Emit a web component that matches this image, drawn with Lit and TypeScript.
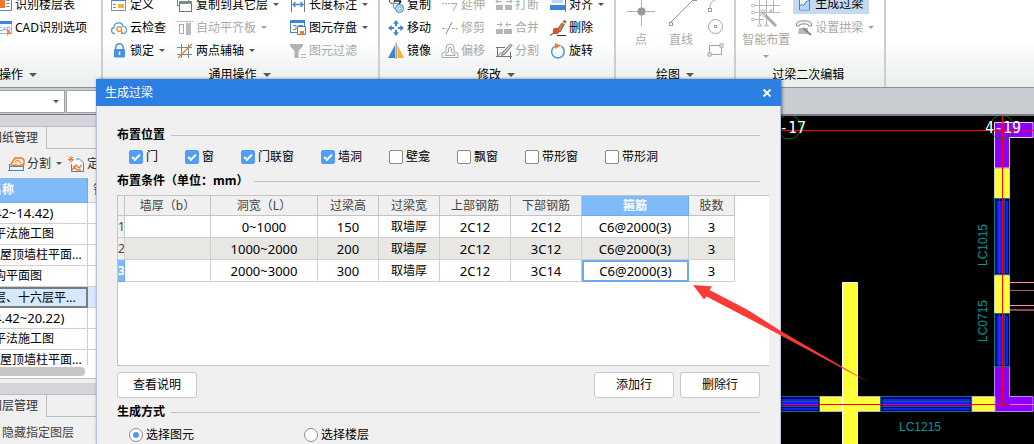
import { LitElement, html, css, svg, nothing } from "lit";
import { customElement, state } from "lit/decorators.js";
import { classMap } from "lit/directives/class-map.js";

const G = "#a9a9a9";

const icons: Record<string, unknown> = {
  floorTable: svg`<path d="M.5 0v13.500h15V0" fill="#fff" stroke="#4a86c8"/><rect x="4" y="2" width="5" height="9" fill="#f07a28"/><path d="M10.500 3.500h3M10.500 6.500h3M10.500 9.500h3" stroke="#777"/>`,
  cad: svg`<rect x=".5" y="1.500" width="15" height="12" fill="#fff" stroke="#9db8d8"/><rect y="1" width="16" height="3" fill="#3f86d2"/><text x="2" y="11" font-size="6" font-family="Liberation Sans" fill="#3f86d2">CAD</text><path d="M11 8v8l2-2h3z" fill="#f4844a"/>`,
  define: svg`<rect x=".5" y="1.500" width="14" height="12" fill="#fff" stroke="#8b9296"/><path d="M0 2.500h15" stroke="#3f86d2" stroke-width="3"/><rect x="7" y="7" width="6" height="4" fill="#f9b233"/><path d="M2 7.500h3M2 10.500h3" stroke="#888"/>`,
  cloud: svg`<path d="M4 13.500C-.5 13.500-.3 8 3 7.700 3 2 11 1 12 6.500c4.500 0 4.500 7 .5 7h-2.500" fill="none" stroke="#4b93dd" stroke-width="1.200"/><circle cx="8.200" cy="9" r="2.400" fill="none" stroke="#ef8636" stroke-width="1.300"/><path d="M10 11l2 2.500" stroke="#ef8636" stroke-width="1.300"/>`,
  lock: svg`<path d="M4.700 7V4.500a3.700 3.700 0 0 1 7.400 0V7" fill="none" stroke="#4a90e0" stroke-width="1.500"/><rect x="3" y="6" width="11" height="8.500" rx="1" fill="#4a90e0"/><path d="M8.500 8.500v3.500" stroke="#fff" stroke-width="1.500"/>`,
  copyFloor: svg`<rect x=".5" y="-1.500" width="11" height="10" fill="#fff" stroke="#4a90d8"/><rect x="2.500" y="4.500" width="12" height="10" fill="#fff" stroke="#6d777b"/><path d="M2 5.500h13" stroke="#7d898d" stroke-width="3"/>`,
  alignSlab: svg`<path d="M0 1.500h16" stroke="${G}" stroke-dasharray="2 1"/><rect x="2.500" y="4.500" width="4" height="9" fill="none" stroke="${G}"/><rect x="9" y="3" width="5" height="12" fill="#b9b9b9"/>`,
  axis: svg`<path d="M4.500 1v14M11.500 1v14M0 4.500h15M0 11.500h15" stroke="#7f8a8e"/><path d="M1 15L15 1" stroke="#e5813d" stroke-width="1.300"/>`,
  dim: svg`<path d="M1.500 0v15M14.500 0v15" stroke="#777"/><path d="M3 7.500h10M5.500 5L3 7.500 5.500 10M10.500 5L13 7.500 10.500 10" stroke="#3f86d2" fill="none" stroke-width="1.300"/>`,
  save: svg`<rect x=".5" y=".5" width="14" height="12" fill="#fff" stroke="#4a86c0"/><path d="M0 1.500h15" stroke="#3f86d2" stroke-width="3"/><path d="M3 5.500h3v4H3M8 5.500h5" stroke="#7c8a90" fill="none"/><path d="M7.500 6.500h8v8h-8z" fill="#fff" stroke="#3f86d2"/><rect x="10" y="11" width="4" height="4" fill="#f07a28"/>`,
  filter: svg`<path d="M0 1h13v2L8.500 8v7h-4V8L0 3z" fill="#b2b2b2"/><path d="M11 11.500h5M11 14.500h5" stroke="#b2b2b2"/>`,
  copy: svg`<circle cx="4" cy="4" r="2.500" fill="none" stroke="#555"/><path d="M6 4h7M13 4l-2 3" stroke="#222" stroke-width="1.500"/><circle cx="8" cy="9" r="2.800" fill="#fff" stroke="#4a90c8"/><circle cx="11.500" cy="11.500" r="4" fill="#cfe6f4" stroke="#2f7fb8"/><circle cx="11.500" cy="11.500" r="1.600" fill="#fff" stroke="#2f7fb8" stroke-width=".7"/>`,
  move: svg`<path d="M8 0l3 3.700H9v2.500H7V3.700H5zM8 16l3-3.700H9V9.800H7v2.500H5zM0 8l3.700-3v2h2.500v2H3.700v2zM16 8l-3.700-3v2H9.800v2h2.500v2z" fill="#3f86d2"/>`,
  mirror: svg`<path d="M7 2v13H0z" fill="#3f86d2"/><path d="M9.500 2v13H16z" fill="#fbb034"/><path d="M8.200 0v16" stroke="#777"/>`,
  extend: svg`<path d="M0 6.500h9" stroke="${G}" stroke-dasharray="2 1"/><path d="M9 6.500h6L11 14" stroke="${G}" fill="none"/>`,
  trim: svg`<path d="M0 8.500h5M10 8.500h6" stroke="${G}" stroke-dasharray="3 1"/><path d="M4 14L10 2" stroke="#888"/>`,
  offset: svg`<path d="M0 14.500v-4l4-2V5a4 4 0 0 1 8 0v3.500l4 2v4z" fill="none" stroke="${G}"/><path d="M3.500 12.500v-2l3-1.500V5a2 2 0 0 1 3 0v4l3.500 2v1.500z" fill="none" stroke="${G}"/>`,
  brk: svg`<rect y="8" width="7" height="5" fill="#b5b5b5"/><rect x="9" y="8" width="7" height="5" fill="#b5b5b5"/><path d="M0 4.500h6M10 4.500h6M2 2L0 4.500l2 2M14 2l2 2.500-2 2" stroke="${G}" fill="none"/>`,
  merge: svg`<rect y="9" width="7" height="5" fill="#b5b5b5"/><rect x="8" y="9" width="8" height="5" fill="#b5b5b5"/><path d="M1 4.500h5M10 4.500h5M4 2l2 2.500L4 7M12 2l-2 2.500L12 7" stroke="${G}" fill="none"/>`,
  split: svg`<path d="M0 4.500h9M1.500 4v9M0 13.500h16M14.500 9v7M1.500 13l4-4" stroke="#777" fill="none"/><path d="M14.500 1L7 9l-1.500 3.500L9 11l7-8.500z" fill="#ccc" stroke="#777"/>`,
  align: svg`<rect x="2" y="0" width="11" height="6" fill="#bcd8f4"/><rect x="0" y="8" width="15" height="5" fill="#3f86d2"/><path d="M15.500 0v15" stroke="#777"/>`,
  del: svg`<path d="M7 9.500L14.500 0 16 1.500 10 12z" fill="#c08447" stroke="#5d4a37" stroke-width=".8"/><path d="M12 2l3 2" stroke="#eee"/><circle cx="6" cy="11" r="3.200" fill="#d3542e"/><path d="M0 15.500l4-2.500M7 15.500h9" stroke="#333"/>`,
  rotate: svg`<path d="M11 3.200A6.300 6.300 0 1 1 5 3.100" fill="none" stroke="#4a90d8" stroke-width="1.400"/><path d="M5 0l6 2.500L5 6z" fill="#f08020"/>`,
  beam: svg`<path d="M3.500-1v15h10V-1" fill="#fff" stroke="#3f86d2"/><path d="M4 10l2-1 2 1 2-4 3-1v8.500H4z" fill="#b7d5f5"/><path d="M4 9.500l2-1 2 1 2-4 3-1" fill="none" stroke="#3f86d2"/>`,
  arch: svg`<path d="M.5 6V3c2-3 13-3 15 0v3h-3V5c-2-1.500-7-1.500-9 0v1z" fill="#eee" stroke="#8f8f8f"/><path d="M3 8h9v6H2z" fill="#b9b9b9"/><path d="M7 8l8 7" stroke="#888" stroke-width="2"/>`,
  splitSheet: svg`<path d="M1.500 8v7M15.500 8v7M1 10.500h15M0 14.500h16" stroke="#3f86d2"/><path d="M3 8l4-6h7l2 2v4l-5 2-4-1-3 1z" fill="#fbe3d2" stroke="#ee7a30" stroke-width="1.400"/><path d="M7 6l3-2 3 3" fill="none" stroke="#ee7a30"/>`,
  locate: svg`<path d="M3 0v7M0 3.500h6M1 1l4 4M5 1L1 5" stroke="#ee7a30"/><path d="M3.500 8v7.500h12V7l-4-4H8" fill="#fff" stroke="#3f86d2"/><path d="M4 14l4-5 3 3 3-3M5 10l4 4h4" fill="none" stroke="#ee7a30" stroke-width="1.500"/>`,
};

const icon = (name: string) =>
  html`<svg class="icon" width="16" height="16" viewBox="0 0 16 16" aria-hidden="true">${icons[name]}</svg>`;

interface Tool {
  i: string;
  t: string;
  arrow?: boolean;
  off?: boolean;
  on?: boolean;
}

const tool = (d: Tool) => html`<button class=${classMap({ tool: true, on: !!d.on })} ?disabled=${!!d.off}>
  ${icon(d.i)}<span>${d.t}</span>${d.arrow ? html`<i class="caret"></i>` : nothing}
</button>`;

const column = (tools: Tool[]) => html`<div class="column">${tools.map(tool)}</div>`;

@customElement("cad-view")
export class CadView extends LitElement {
  static styles = css`
    :host {
      display: flex;
      flex: 1;
      justify-content: flex-end;
      background: #000;
      border-top: 1px solid #777c80;
      overflow: hidden;
    }
    svg {
      flex: none;
      overflow: visible;
    }
    .mark {
      font: 15px "DejaVu Sans Mono", monospace;
      fill: #fff;
    }
    .code {
      font: 12px "Liberation Sans", sans-serif;
      fill: #009a9a;
    }
  `;

  private windowV(y: number, h: number) {
    return svg`<rect x="994.500" y=${y + 0.5} width="15" height=${h - 1} fill="#000078" stroke="#007c7c"/>
      <rect x="997" y=${y + 3} width="2" height=${h - 5} fill="#1c1cff"/>
      <rect x="1000" y=${y + 3} width="4" height=${h - 5} fill="#1c1cff"/>
      <rect x="1006" y=${y + 3} width="2" height=${h - 5} fill="#1c1cff"/>
      <path d="M999.500 ${y}v${h}M1004.500 ${y}v${h}" stroke="#00628c"/>`;
  }

  private windowH(x: number, w: number) {
    return svg`<rect x=${x + 0.5} y="396.500" width=${w - 1} height="15" fill="#000078" stroke="#007c7c"/>
      <rect x=${x + 3} y="399" width=${w - 5} height="2" fill="#1c1cff"/>
      <rect x=${x + 3} y="402" width=${w - 5} height="4" fill="#1c1cff"/>
      <rect x=${x + 3} y="408" width=${w - 5} height="2" fill="#1c1cff"/>
      <path d="M${x} 401.500h${w}M${x} 406.500h${w}" stroke="#00628c"/>`;
  }

  render() {
    return html`<svg width="253" height="329" viewBox="781 116 253 329" role="img" aria-label="平面图">
      <path d="M994.500 122.500h38.500v15h-23.500v30.500h-15z" fill="#8c00ff" stroke="#e6d0ff" />
      <path d="M994.500 366v45.500h38.500v-15h-23.500V366z" fill="#8c00ff" stroke="#b58ae0" />
      <path d="M994.500 168.500h15v30h-15zM994.500 275.500h15v38h-15z" fill="#ffff38" stroke="#d0d0b0" />
      ${this.windowV(198, 77)}${this.windowV(313, 54)}
      <path d="M1010 282.500h24M1010 305.500h24" stroke="#ff8ca0" />
      <path d="M1010 290.500h24" stroke="#b05a6c" />
      <path d="M1010 310h24" stroke="#8a4654" stroke-width="2" />
      <path d="M819 396.500h62v15h-62zM972 396.500h23v15h-23z" fill="#ffff38" stroke="#b8b8b8" />
      ${this.windowH(760, 60)}${this.windowH(880, 92)}
      <path d="M842.500 450V282.500h15V450" fill="#ffff38" stroke="#fff" />
      <path d="M740 130.500h294M1002.500 115v289M760 404.500h250" fill="none" stroke="#f00" />
      <path d="M1010 404.500h24" stroke="#ff7898" />
      <g fill="none" stroke="#087408">
        <circle cx="789" cy="127" r="12" />
        <circle cx="1002" cy="127" r="12" />
      </g>
      <text class="mark" x="770" y="133">4-17</text>
      <text class="mark" x="985" y="133">4-19</text>
      <text class="code" x="899" y="431">LC1215</text>
      <text class="code" transform="translate(987 266) rotate(-90)">LC1015</text>
      <text class="code" transform="translate(987 342) rotate(-90)">LC0715</text>
    </svg>`;
  }
}

@customElement("lintel-dialog")
export class LintelDialog extends LitElement {
  static styles = css`
    :host {
      display: block;
      box-sizing: border-box;
      background: #f0f0f0;
      box-shadow: 1px 0 3px rgba(0, 0, 0, 0.5);
      color: #000;
    }
    .title {
      display: flex;
      align-items: center;
      justify-content: space-between;
      height: 27px;
      padding: 0 9px;
      background: #2c80e2;
      color: #fff;
      font-size: 12px;
    }
    .close {
      display: flex;
      padding: 0;
      border: 0;
      background: none;
    }
    .body {
      border: solid #b9c4da;
      border-width: 0 1px;
      padding: 20px 20px 0;
    }
    .heading {
      display: flex;
      align-items: center;
      gap: 6px;
      height: 18px;
      margin: 0;
      font-size: 12px;
      font-weight: 700;
    }
    .heading::after {
      content: "";
      flex: 1;
      height: 1px;
      background: #c3c3c3;
    }
    .choices {
      display: flex;
      gap: 27px;
      padding: 4px 12px 6px;
    }
    label {
      display: flex;
      align-items: center;
      gap: 3px;
      height: 18px;
    }
    input {
      appearance: none;
      box-sizing: border-box;
      display: grid;
      place-content: center;
      width: 14px;
      height: 14px;
      margin: 0;
      border: 1px solid #8a8a8a;
      border-radius: 2px;
      background: #fff;
    }
    input[type="checkbox"]:checked {
      border-color: #559cf8;
      background: #559cf8;
    }
    input[type="checkbox"]:checked::before {
      content: "";
      width: 6px;
      height: 3px;
      margin-bottom: 2px;
      border: solid #fff;
      border-width: 0 0 2px 2px;
      transform: rotate(-45deg);
    }
    input[type="radio"] {
      border-radius: 50%;
    }
    input[type="radio"]:checked::before {
      content: "";
      width: 6px;
      height: 6px;
      border-radius: 50%;
      background: #4f9bf8;
    }
    .grid {
      height: 171px;
      margin: 5px -9px 6px 0;
      border: solid #c3c3c3;
      border-width: 1px 0 1px 1px;
      background: #fff;
      box-sizing: border-box;
    }
    table {
      border-collapse: separate;
      border-spacing: 0;
      table-layout: fixed;
      width: 617px;
    }
    th,
    td {
      box-sizing: border-box;
      padding: 0;
      border: solid #cfcfcf;
      border-width: 0 1px 1px 0;
      overflow: hidden;
      text-align: center;
      font-weight: 400;
      line-height: 20px;
      height: 22px;
      white-space: nowrap;
    }
    thead th {
      height: 20px;
      line-height: 19px;
      background: #f0f0f0;
      border-color: #c3c3c3;
      color: #444;
    }
    tbody th {
      background: #f0f0f0;
      color: #444;
      font-size: 12px;
    }
    td.num {
      font-size: 13px;
    }
    tbody tr:nth-child(even) td {
      background: #e8e7e3;
    }
    thead th.current,
    tbody th.current {
      background: #80bbf9;
      border-color: #6eaaea;
      color: #fff;
      font-weight: 700;
    }
    td.current {
      border: 0;
      box-shadow: inset 0 0 0 2px #6eaaea;
    }
    .actions {
      display: flex;
      gap: 6px;
      margin-bottom: 5px;
    }
    .actions button {
      width: 80px;
      height: 26px;
      padding: 0;
      border: 1px solid #c8c8c8;
      border-radius: 3px;
      background: #fff;
      font: inherit;
    }
    .actions .first {
      margin-right: auto;
    }
    .modes {
      display: grid;
      grid-template-columns: 175px 1fr;
      padding: 5px 12px 30px;
    }
  `;

  @state() private places: [string, boolean][] = [
    ["门", true],
    ["窗", true],
    ["门联窗", true],
    ["墙洞", true],
    ["壁龛", false],
    ["飘窗", false],
    ["带形窗", false],
    ["带形洞", false],
  ];

  private widths = [7, 86, 107, 61, 61, 71, 71, 107, 46];
  private heads = ["墙厚（b）", "洞宽（L）", "过梁高", "过梁宽", "上部钢筋", "下部钢筋", "箍筋", "肢数"];
  private rows = [
    ["", "0~1000", "150", "取墙厚", "2C12", "2C12", "C6@2000(3)", "3"],
    ["", "1000~2000", "200", "取墙厚", "2C12", "3C12", "C6@2000(3)", "3"],
    ["", "2000~3000", "300", "取墙厚", "2C12", "3C14", "C6@2000(3)", "3"],
  ];

  render() {
    return html`
      <div class="title">
        <span>生成过梁</span>
        <button class="close" aria-label="关闭">
          <svg width="10" height="10" viewBox="0 0 10 10">
            <path d="M1.500 1.500l7 7M8.500 1.500l-7 7" stroke="#fff" stroke-width="1.800" />
          </svg>
        </button>
      </div>
      <div class="body">
        <h2 class="heading">布置位置</h2>
        <div class="choices">
          ${this.places.map(([t, on]) => html`<label><input type="checkbox" .checked=${on} />${t}</label>`)}
        </div>
        <h2 class="heading">布置条件（单位：mm）</h2>
        <div class="grid">
          <table>
            <colgroup>
              ${this.widths.map((w) => html`<col style="width:${w}px" />`)}
            </colgroup>
            <thead>
              <tr>
                <th></th>
                ${this.heads.map((h, i) => html`<th class=${classMap({ current: i === 6 })}>${h}</th>`)}
              </tr>
            </thead>
            <tbody>
              ${this.rows.map(
                (r, n) => html`<tr>
                  <th class=${classMap({ current: n === 2 })}>${n + 1}</th>
                  ${r.map(
                    (c, i) => html`<td class=${classMap({ num: i !== 3, current: n === 2 && i === 6 })}>${c}</td>`
                  )}
                </tr>`
              )}
            </tbody>
          </table>
        </div>
        <div class="actions">
          <button class="first">查看说明</button>
          <button>添加行</button>
          <button>删除行</button>
        </div>
        <h2 class="heading">生成方式</h2>
        <div class="modes">
          <label><input type="radio" name="mode" checked />选择图元</label>
          <label><input type="radio" name="mode" />选择楼层</label>
        </div>
      </div>
    `;
  }
}

@customElement("app-root")
export class AppRoot extends LitElement {
  static styles = css`
    :host {
      position: relative;
      display: flex;
      flex-direction: column;
      height: 100vh;
      overflow: hidden;
      background: #c9ccd1;
      color: #000;
      font: 12px/18px "Noto Sans", "Noto Sans CJK SC", sans-serif;
    }
    button,
    select {
      font: inherit;
      color: inherit;
    }
    .ribbon {
      display: flex;
      flex: none;
      height: 87px;
      overflow: hidden;
      border-bottom: 1px solid #8b9094;
      background: linear-gradient(#fff 45%, #e9eeed);
    }
    .group {
      display: flex;
      flex-direction: column;
      justify-content: flex-end;
      padding: 0 10px 0 8px;
      border-right: 2px solid #cbcfd1;
    }
    .group.edge {
      padding: 0 14px 0 0;
      margin-left: -4px;
    }
    .group.draw {
      padding: 0 11px;
    }
    .group.lintel {
      padding-left: 6px;
    }
    .tools {
      display: flex;
      flex: none;
      gap: 11px;
    }
    .draw .tools {
      gap: 12px;
    }
    .lintel .tools {
      gap: 3px;
    }
    .column {
      display: flex;
      flex-direction: column;
      align-items: flex-start;
      height: 69px;
    }
    .tool {
      display: flex;
      align-items: center;
      gap: 3px;
      height: 23px;
      padding: 0;
      border: 0;
      background: none;
      white-space: nowrap;
    }
    .lintel .tool {
      padding: 0 0 0 3px;
    }
    .lintel .tool.on {
      height: 21px;
      margin-bottom: 2px;
      padding-right: 6px;
      background: #c5d9f1;
    }
    button:disabled {
      color: #a9a9a9;
    }
    .icon {
      flex: none;
      overflow: visible;
    }
    .caret {
      width: 0;
      height: 0;
      margin-left: 2px;
      border: solid transparent;
      border-width: 3px 3px 0;
      border-top-color: #555;
    }
    .group-name .caret {
      border-width: 4px 4px 0;
    }
    button:disabled .caret {
      border-top-color: #a0a0a0;
    }
    .group-name {
      display: flex;
      flex: none;
      align-items: center;
      justify-content: center;
      gap: 4px;
      height: 25px;
    }
    .edge .group-name {
      justify-content: flex-start;
      padding-left: 3px;
    }
    .big {
      display: flex;
      flex-direction: column;
      align-items: center;
      height: 69px;
      padding: 7px 0 0;
      border: 0;
      background: none;
    }
    .big svg {
      flex: none;
      overflow: visible;
    }
    .big span {
      height: 18px;
      margin-top: 3px;
    }
    .big .caret {
      margin: 6px 0 0;
    }
    .options {
      display: flex;
      flex: none;
      gap: 1px;
      padding: 2px 0 1px;
      border-bottom: 1px solid #777c84;
    }
    .combo {
      display: flex;
      align-items: center;
      justify-content: flex-end;
      box-sizing: border-box;
      width: 65px;
      height: 23px;
      padding-right: 5px;
      border: 1px solid #a2a2a2;
      border-left: 0;
      background: #fff;
    }
    .combo.wide {
      width: 220px;
      border-left: 1px solid #a2a2a2;
    }
    .combo select {
      appearance: none;
      flex: 1;
      min-width: 0;
      border: 0;
      padding: 0;
      background: none;
    }
    .work {
      display: flex;
      flex: 1;
      min-height: 0;
    }
    .dock {
      display: flex;
      flex-direction: column;
      width: 96px;
      background: #f0f0f0;
      overflow: hidden;
    }
    .tabs {
      display: flex;
      flex: none;
      padding-top: 11px;
      background: #d3d5db;
    }
    .tabs + .layer {
      margin-top: 1px;
    }
    .tabs::after {
      content: "";
      flex: 1;
      border: solid #b9bcc4;
      border-width: 1px 0;
      background: #f0f0f0;
    }
    .tab {
      display: flex;
      justify-content: flex-end;
      box-sizing: border-box;
      width: 47px;
      height: 23px;
      padding: 0 8px 0 0;
      border: solid #b9bcc4;
      border-width: 1px 1px 0 0;
      background: #f0f0f0;
      line-height: 22px;
      color: #333;
      white-space: nowrap;
      overflow: hidden;
    }
    .bar {
      display: flex;
      flex: none;
      align-items: center;
      gap: 6px;
      height: 29px;
      padding-left: 8px;
      color: #333;
    }
    .sheets {
      flex: none;
      height: 187px;
      overflow: hidden;
      background: #fff;
    }
    table {
      border-collapse: separate;
      border-spacing: 0;
      table-layout: fixed;
      width: 130px;
      background: #fff;
    }
    td,
    th {
      box-sizing: border-box;
      height: 21px;
      padding: 0;
      border: solid #d0d0d0;
      border-width: 0 1px 1px 0;
      line-height: 20px;
      text-align: left;
      white-space: nowrap;
      overflow: hidden;
    }
    th {
      height: 25px;
      background: #f0f0f0;
      color: #555;
      font-weight: 400;
      padding-left: 5px;
    }
    th.on {
      padding: 0;
      background: #80bbf9;
      border-color: #6eaaea;
      color: #fff;
      font-weight: 700;
    }
    .name {
      width: 88px;
    }
    .cut {
      text-indent: -6px;
    }
    th.cut {
      text-indent: -10px;
    }
    .num {
      font-size: 13px;
    }
    tr.on td {
      background: #d5e8fd;
    }
    tr.on td.name {
      border: 2px solid #7c7c7c;
      border-left: 0;
      line-height: 17px;
    }
    .track {
      flex: none;
      padding: 2px 11px 2px 0;
      background: #fff;
      border-bottom: 1px solid #b9bcc4;
      margin-bottom: 4px;
    }
    .thumb {
      height: 9px;
      border-radius: 0 4px 4px 0;
      background: #c6c6c6;
    }
    .layer {
      padding: 6px 2px;
      color: #444;
      white-space: nowrap;
    }
    cad-view {
      min-width: 0;
    }
    lintel-dialog {
      position: absolute;
      top: 79px;
      left: 96px;
      right: 253px;
      bottom: 0;
      overflow: hidden;
    }
    .pointer {
      position: absolute;
      top: 284px;
      right: 163px;
      pointer-events: none;
    }
  `;

  private sheets: [string, string][] = [
    ["42~14.42)", "num cut"],
    ["平法施工图", "cut"],
    ["屋顶墙柱平面...", ""],
    ["构平面图", "cut"],
    ["层、十六层平...", "cut"],
    ["4.42~20.22)", "num cut"],
    ["平法施工图", "cut"],
    ["屋顶墙柱平面...", ""],
  ];

  private ribbon() {
    return html`<header class="ribbon">
      <section class="group edge">
        <div class="tools">
          ${column([
            { i: "floorTable", t: "识别楼层表" },
            { i: "cad", t: "CAD识别选项" },
          ])}
        </div>
        <div class="group-name">操作<i class="caret"></i></div>
      </section>
      <section class="group">
        <div class="tools">
          ${column([
            { i: "define", t: "定义" },
            { i: "cloud", t: "云检查" },
            { i: "lock", t: "锁定", arrow: true },
          ])}
          ${column([
            { i: "copyFloor", t: "复制到其它层", arrow: true },
            { i: "alignSlab", t: "自动平齐板", arrow: true, off: true },
            { i: "axis", t: "两点辅轴", arrow: true },
          ])}
          ${column([
            { i: "dim", t: "长度标注", arrow: true },
            { i: "save", t: "图元存盘", arrow: true },
            { i: "filter", t: "图元过滤", off: true },
          ])}
        </div>
        <div class="group-name">通用操作<i class="caret"></i></div>
      </section>
      <section class="group">
        <div class="tools">
          ${column([
            { i: "copy", t: "复制" },
            { i: "move", t: "移动" },
            { i: "mirror", t: "镜像" },
          ])}
          ${column([
            { i: "extend", t: "延伸", off: true },
            { i: "trim", t: "修剪", off: true },
            { i: "offset", t: "偏移", off: true },
          ])}
          ${column([
            { i: "brk", t: "打断", off: true },
            { i: "merge", t: "合并", off: true },
            { i: "split", t: "分割", off: true },
          ])}
          ${column([
            { i: "align", t: "对齐", arrow: true },
            { i: "del", t: "删除" },
            { i: "rotate", t: "旋转" },
          ])}
        </div>
        <div class="group-name">修改<i class="caret"></i></div>
      </section>
      <section class="group draw">
        <div class="tools">
          <button class="big" disabled>
            <svg width="28" height="28" viewBox="0 0 28 28">
              <path d="M0 11.500h28M14.500-2v28" stroke="#b0b0b0" />
              <circle cx="14.500" cy="11.500" r="4" fill="#999" />
            </svg>
            <span>点</span>
          </button>
          <button class="big" disabled>
            <svg width="28" height="28" viewBox="0 0 28 28">
              <path d="M4 22L27-1" stroke="#999" />
              <rect x="2.500" y="22.500" width="3" height="3" fill="#fff" stroke="#999" />
              <rect x="26.500" y="-2.500" width="3" height="3" fill="#fff" stroke="#999" />
            </svg>
            <span>直线</span>
          </button>
          <svg class="icon" width="16" height="69" viewBox="0 0 16 69" fill="none" stroke="#a4a4a4">
            <path d="M3 15c0-5 2-7 7-9" />
            <rect x="1.500" y="15.500" width="3" height="3" fill="#fff" />
            <circle cx="8.500" cy="33.500" r="7" />
            <rect x="7.500" y="32.500" width="2" height="2" />
            <path d="M2.500 52.500h12v9h-12z" />
            <rect x="1" y="60" width="3" height="3" fill="#fff" />
            <rect x="13" y="51" width="3" height="3" fill="#fff" />
          </svg>
        </div>
        <div class="group-name">绘图<i class="caret"></i></div>
      </section>
      <section class="group lintel">
        <div class="tools">
          <button class="big" disabled>
            <svg width="28" height="28" viewBox="0 0 28 28" fill="none" stroke="#b8b8b8">
              <path d="M0 5.500h28M0 12.500h28M0 19.500h12M7.500-2v26M14.500-2v28M21.500-2v14" />
              <circle cx="1" cy="5.500" r="1.500" fill="#fff" />
              <circle cx="1" cy="12.500" r="1.500" fill="#fff" />
              <circle cx="1" cy="19.500" r="1.500" fill="#fff" />
              <path d="M7.500 23l-2 3h4zM14.500 23l-2 3h4z" fill="#fff" />
              <path d="M13 15l11 11" stroke="#aaa" stroke-width="3" />
              <path d="M11 9v8M7 13h8M8 10l6 6M14 10l-6 6M19 9v4M17 11h4" />
            </svg>
            <span>智能布置</span>
            <i class="caret"></i>
          </button>
          ${column([
            { i: "beam", t: "生成过梁", on: true },
            { i: "arch", t: "设置拱梁", arrow: true, off: true },
          ])}
        </div>
        <div class="group-name">过梁二次编辑</div>
      </section>
    </header>`;
  }

  render() {
    return html`
      ${this.ribbon()}
      <div class="options">
        <div class="combo"><select aria-label="楼层"></select><i class="caret"></i></div>
        <div class="combo wide"><select aria-label="构件"></select><i class="caret"></i></div>
      </div>
      <main class="work">
        <aside class="dock">
          <div class="tabs"><button class="tab">图纸管理</button></div>
          <div class="bar">
            <button class="tool">${icon("splitSheet")}<span>分割</span><i class="caret"></i></button>
            <button class="tool">${icon("locate")}<span>定位</span></button>
          </div>
          <div class="sheets">
            <table>
              <thead>
                <tr>
                  <th class="name on cut">名称</th>
                  <th>锁定</th>
                </tr>
              </thead>
              <tbody>
                ${this.sheets.map(
                  ([t, c], i) => html`<tr class=${i === 4 ? "on" : ""}>
                    <td class="name ${c}">${t}</td>
                    <td></td>
                  </tr>`
                )}
              </tbody>
            </table>
          </div>
          <div class="track"><div class="thumb"></div></div>
          <div class="tabs"><button class="tab">图层管理</button></div>
          <div class="layer">隐藏指定图层</div>
        </aside>
        <cad-view></cad-view>
      </main>
      <lintel-dialog></lintel-dialog>
      <svg class="pointer" width="178" height="100" viewBox="693 284 178 100" aria-hidden="true">
        <path d="M693 285l19 1.500-2.500 3.500L747 309.500 780 330.500 870 383 780 335 706.500 296.500 704 299.500z" fill="#fb3a38" />
      </svg>
    `;
  }
}
